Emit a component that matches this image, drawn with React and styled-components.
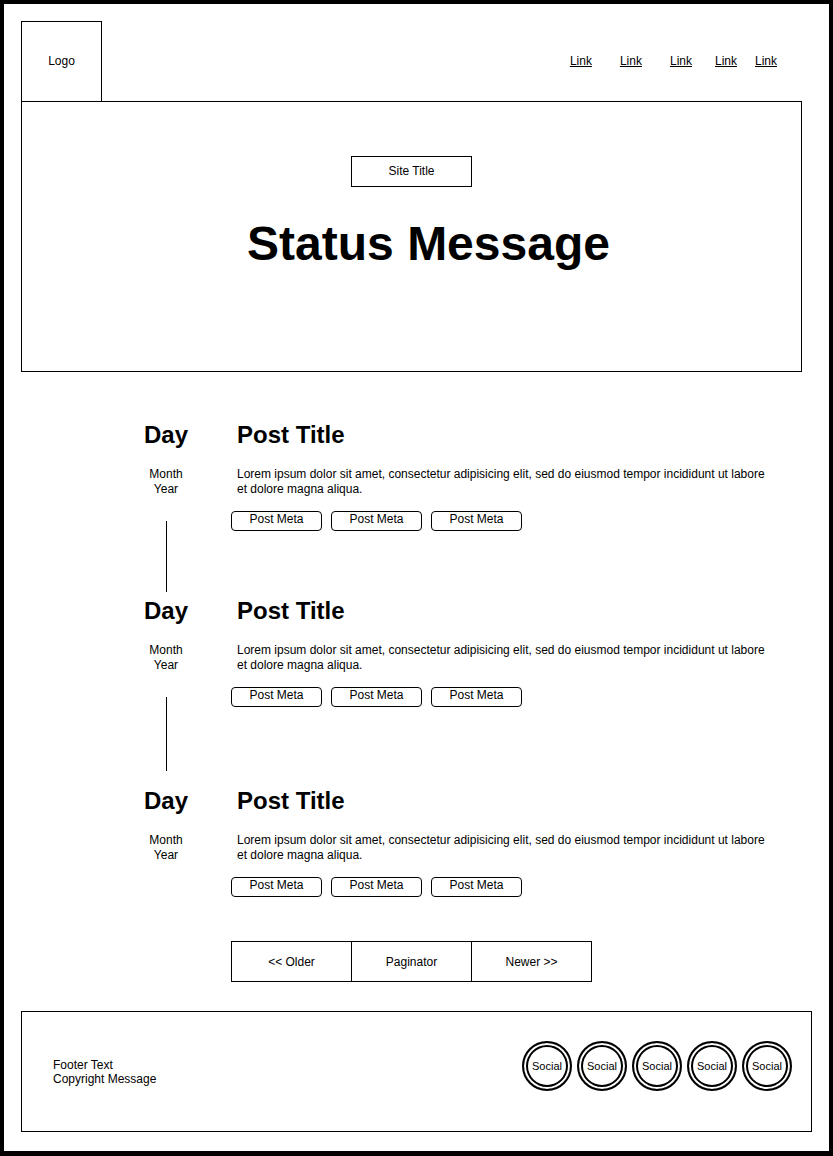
import styled, { createGlobalStyle } from "styled-components";

const GlobalStyle = createGlobalStyle`
  body {
    margin: 0;
    background: #fff;
    color: #000;
    font-family: "Liberation Sans", Arial, Helvetica, sans-serif;
  }
`;

const links = [0, 28, 28, 23, 18];

const posts = [
  { id: 1, line: 71, after: 4 },
  { id: 2, line: 74, after: 15 },
  { id: 3, line: 0, after: 0 },
];

const App = () => {
  return (
    <>
      <GlobalStyle />
      <Page>
        <TopBar>
          <Logo>Logo</Logo>
          <Nav>
            {links.map((space, i) => (
              <NavLink key={i} href="#" $space={space}>
                Link
              </NavLink>
            ))}
          </Nav>
        </TopBar>
        <Hero>
          <SiteTitle>Site Title</SiteTitle>
          <Status>Status Message</Status>
        </Hero>

        <Main>
          {posts.map((post) => (
            <Post key={post.id} $after={post.after}>
              <DateCol>
                <Day>Day</Day>
                <DateText>
                  Month
                  <br />
                  Year
                </DateText>
                {post.line > 0 && <Connector $len={post.line} />}
              </DateCol>
              <Body>
                <PostTitle>Post Title</PostTitle>
                <Excerpt>
                  Lorem ipsum dolor sit amet, consectetur adipisicing elit, sed do
                  eiusmod tempor incididunt ut labore et dolore magna aliqua.
                </Excerpt>
                <MetaRow>
                  <Meta>Post Meta</Meta>
                  <Meta>Post Meta</Meta>
                  <Meta>Post Meta</Meta>
                </MetaRow>
              </Body>
            </Post>
          ))}

          <Paginator>
            <PageCell>&lt;&lt; Older</PageCell>
            <PageCell>Paginator</PageCell>
            <PageCell>Newer &gt;&gt;</PageCell>
          </Paginator>
        </Main>

        <Footer>
          <FooterText>
            Footer Text
            <br />
            Copyright Message
          </FooterText>
          <Socials>
            {[1, 2, 3, 4, 5].map((n) => (
              <Social key={n}>Social</Social>
            ))}
          </Socials>
        </Footer>
      </Page>
    </>
  );
};

export default App;

const Page = styled.div`
  width: 833px;
  height: 1156px;
  box-sizing: border-box;
  border: solid #000;
  border-width: 4px 4px 5px 4px;
  padding: 17px;
  overflow: hidden;
`;

const TopBar = styled.div`
  display: flex;
  align-items: center;
  height: 81px;
`;

const Logo = styled.div`
  width: 81px;
  height: 81px;
  box-sizing: border-box;
  border: 1px solid #000;
  padding-bottom: 2px;
  display: flex;
  align-items: center;
  justify-content: center;
  font-size: 12px;
`;

const Nav = styled.nav`
  display: flex;
  margin-left: auto;
  margin-right: 35px;
  padding-bottom: 2px;
`;

const NavLink = styled.a`
  margin-left: ${(p) => p.$space}px;
  font-size: 12px;
  color: #000;
  text-decoration: underline;
`;

const Hero = styled.div`
  width: 781px;
  height: 271px;
  box-sizing: border-box;
  margin-top: -1px;
  border: 1px solid #000;
  padding-top: 54px;
  display: flex;
  flex-direction: column;
  align-items: center;
`;

const SiteTitle = styled.div`
  width: 121px;
  height: 31px;
  box-sizing: border-box;
  border: 1px solid #000;
  padding-bottom: 2px;
  display: flex;
  align-items: center;
  justify-content: center;
  font-size: 12px;
`;

const Status = styled.h1`
  margin: 29px 0 0;
  padding-left: 34px;
  font-size: 48px;
  line-height: 56px;
  font-weight: bold;
`;

const Main = styled.main`
  margin-top: 48px;
  padding-left: 105px;
`;

const Post = styled.article`
  display: grid;
  grid-template-columns: 80px 1fr;
  column-gap: 25px;
  align-items: start;
  margin-bottom: ${(p) => p.$after}px;
`;

const DateCol = styled.div`
  display: flex;
  flex-direction: column;
  align-items: center;
`;

const Day = styled.div`
  font-size: 24px;
  line-height: 30px;
  font-weight: bold;
`;

const DateText = styled.div`
  margin-top: 17px;
  font-size: 12px;
  line-height: 15px;
  text-align: center;
`;

const Connector = styled.div`
  margin-top: 24px;
  width: 1px;
  height: ${(p) => p.$len}px;
  background: #000;
`;

const Body = styled.div`
  display: flex;
  flex-direction: column;
`;

const PostTitle = styled.h2`
  margin: 0;
  padding-left: 6px;
  font-size: 24px;
  line-height: 30px;
  font-weight: bold;
`;

const Excerpt = styled.p`
  margin: 17px 0 0;
  padding-left: 6px;
  width: 535px;
  font-size: 12px;
  line-height: 15px;
`;

const MetaRow = styled.div`
  display: flex;
  gap: 9px;
  margin-top: 14px;
`;

const Meta = styled.div`
  width: 91px;
  height: 20px;
  box-sizing: border-box;
  border: 1px solid #000;
  border-radius: 4px;
  font-size: 12px;
  line-height: 14px;
  text-align: center;
`;

const Paginator = styled.div`
  display: flex;
  margin: 44px 0 0 105px;
`;

const PageCell = styled.div`
  width: 121px;
  height: 41px;
  box-sizing: border-box;
  border: 1px solid #000;
  display: flex;
  align-items: center;
  justify-content: center;
  font-size: 12px;
  & + & {
    margin-left: -1px;
  }
`;

const Footer = styled.footer`
  margin-top: 29px;
  height: 121px;
  box-sizing: border-box;
  border: 1px solid #000;
  padding: 0 19px 0 31px;
  display: flex;
  align-items: center;
  justify-content: space-between;
`;

const FooterText = styled.div`
  font-size: 12px;
  line-height: 14px;
`;

const Socials = styled.div`
  display: flex;
  gap: 5px;
  margin-bottom: 11px;
`;

const Social = styled.div`
  width: 50px;
  height: 50px;
  box-sizing: border-box;
  border: 2px solid #000;
  border-radius: 50%;
  box-shadow: inset 0 0 0 2px #fff, inset 0 0 0 4px #000;
  display: flex;
  align-items: center;
  justify-content: center;
  font-size: 11px;
`;
